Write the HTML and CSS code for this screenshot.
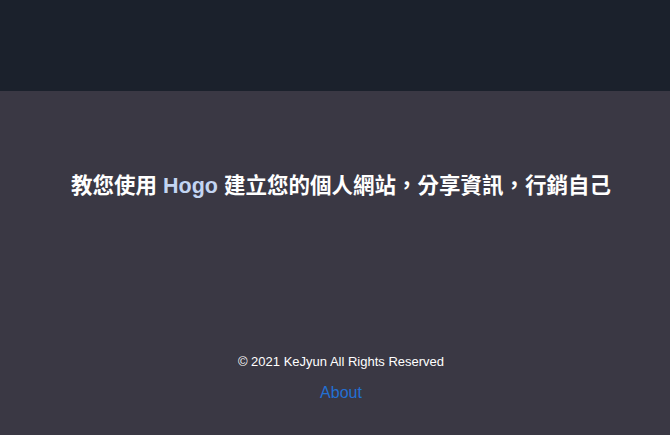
FILE: index.html
```html
<!DOCTYPE html>
<html lang="zh-Hant">
<head>
<meta charset="utf-8">
<link rel="stylesheet" href="styles.css">
</head>
<body>
<header class="topbar"></header>
<main class="hero">
  <h1 class="hero-title">教您使用 <span class="brand">Hogo</span> 建立您的個人網站<span class="punct">，</span>分享資訊<span class="punct">，</span>行銷自己</h1>
</main>
<footer class="footer">
  <p class="copy">© 2021 KeJyun All Rights Reserved</p>
  <a class="about" href="#">About</a>
</footer>
</body>
</html>
```
FILE: styles.css
```css
html, body {
  margin: 0;
  padding: 0;
  height: 100%;
}
body {
  background: #3a3844;
  font-family: "Liberation Sans", "Noto Sans CJK TC", sans-serif;
  color: #fff;
  display: flex;
  flex-direction: column;
}
.topbar {
  height: 91px;
  background: #1b212c;
  flex: none;
}
.hero {
  padding: 76px 0 0 12px;
  height: 160px;
  box-sizing: border-box;
}
.hero-title {
  margin: 0;
  text-align: center;
  font-size: 21.5px;
  font-weight: bold;
  line-height: 34px;
  font-family: "Liberation Sans", "Noto Sans CJK TC", sans-serif;
}
.punct {
  font-family: "Noto Sans CJK SC", sans-serif;
}
.brand {
  color: #c3d5f2;
}
.footer {
  padding: 0 0 0 12px;
  margin-top: 102px;
  text-align: center;
}
.copy {
  margin: 0;
  font-size: 13px;
  line-height: 18px;
}
.about {
  display: inline-block;
  margin-top: 12px;
  font-size: 16px;
  line-height: 20px;
  color: #2370d3;
  text-decoration: none;
}
```
